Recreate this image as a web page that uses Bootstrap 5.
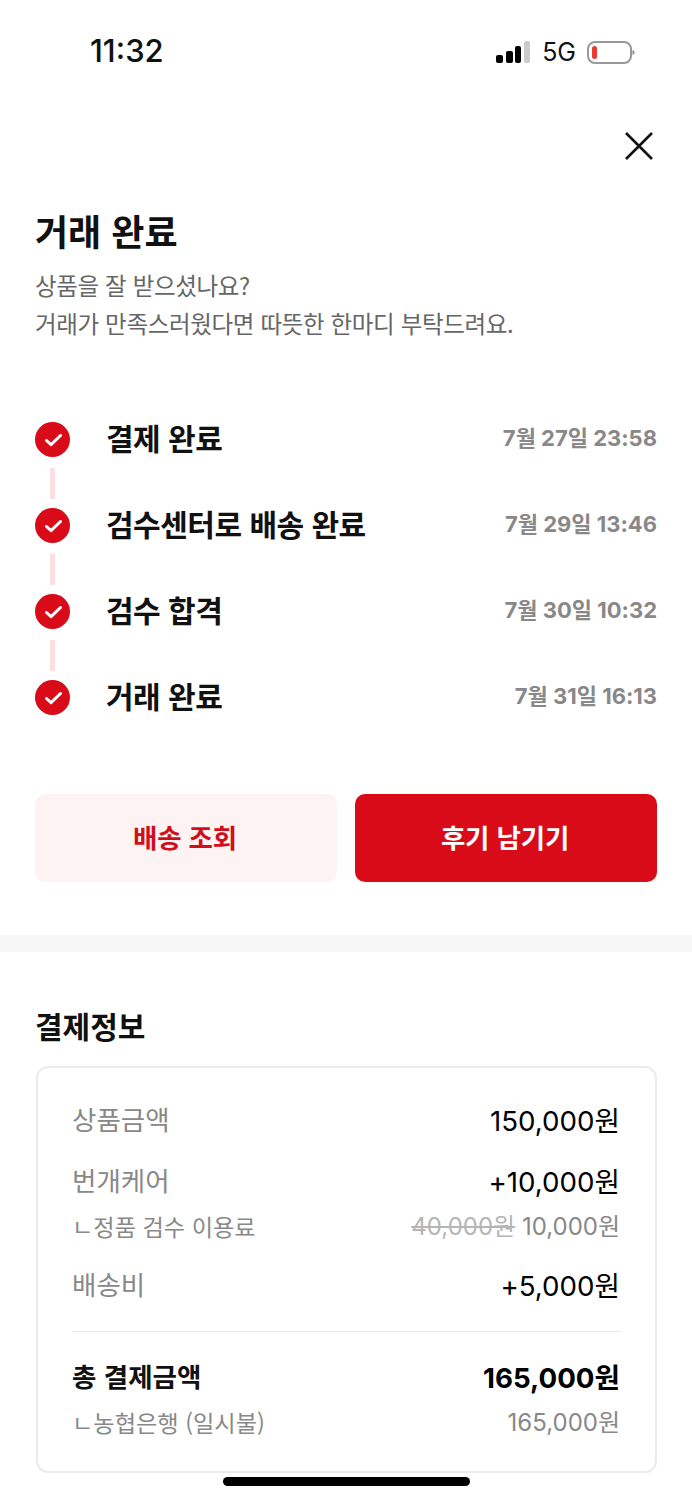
<!DOCTYPE html>
<html lang="ko">
<head>
  <meta charset="UTF-8">
  <title>거래 완료</title>
  <link href="https://cdn.jsdelivr.net/npm/bootstrap@5.3.0/dist/css/bootstrap.min.css" rel="stylesheet">
  <style>
    body {
      background-color: #fff;
      color: #111;
      font-family: "Noto Sans CJK KR", "Liberation Sans", sans-serif;
    }
    .phone {
      position: relative;
      width: 692px;
      height: 1500px;
      overflow: hidden;
    }
    .status-bar {
      height: 72px;
      padding: 30px 57px 0 90px;
    }
    .status-time {
      font-family: Inter, "Liberation Sans", sans-serif;
      font-size: 31px;
      font-weight: 500;
      line-height: 42px;
    }
    .status-net {
      font-family: Inter, "Liberation Sans", sans-serif;
      font-size: 25px;
      line-height: 44px;
      margin: 0 11px 0 10px;
    }
    .close-row {
      height: 82px;
      padding: 58px 37px 0 0;
      display: flex;
      justify-content: flex-end;
    }
    .top-section {
      padding: 0 35px;
    }
    .page-title {
      font-size: 36px;
      font-weight: 700;
      line-height: 50px;
      margin: 51px 0 11px;
    }
    .page-sub {
      font-size: 23.5px;
      line-height: 38px;
      color: #666;
      letter-spacing: -0.33px;
    }
    .steps {
      margin-top: 80px;
    }
    .step-row {
      height: 35px;
      margin-bottom: 51px;
      position: relative;
    }
    .step-row:last-child {
      margin-bottom: 0;
    }
    .step-row:not(:last-child)::after {
      content: "";
      position: absolute;
      left: 15px;
      top: 46px;
      width: 5px;
      height: 31px;
      background-color: #fae0e2;
    }
    .step-dot {
      width: 35px;
      height: 35px;
      flex: none;
      border-radius: 50%;
      background-color: #d90b18;
      display: flex;
      align-items: center;
      justify-content: center;
    }
    .step-name {
      font-size: 30px;
      font-weight: 700;
      letter-spacing: -0.5px;
      margin: 0 0 4px 36px;
    }
    .step-date {
      font-family: Inter, "Noto Sans CJK KR", sans-serif;
      font-size: 22px;
      font-weight: 700;
      color: #888;
      margin: 0 0 2px auto;
    }
    .action-row {
      margin-top: 79px;
      gap: 18px;
    }
    .action-btn {
      flex: 1;
      height: 88px;
      border: 0;
      border-radius: 10px;
      font-size: 26.5px;
      font-weight: 700;
      letter-spacing: -0.2px;
      padding: 0 2px 2px 0;
    }
    .btn-soft {
      background-color: #fdf3f3;
      color: #d00f1c;
    }
    .btn-main {
      background-color: #d90b18;
      color: #fff;
    }
    .thick-divider {
      height: 17px;
      margin-top: 53px;
      background-color: #f6f6f6;
    }
    .pay-title {
      font-size: 30px;
      font-weight: 700;
      line-height: 44px;
      margin: 51px 0 19px;
    }
    .pay-box {
      margin: 0 0 0 1px;
      height: 407px;
      padding: 25px 35px 0 34px;
      border: 2px solid #ebebeb;
      border-radius: 12px;
    }
    .pay-row {
      line-height: 56px;
      height: 56px;
      font-size: 26.5px;
      color: #888;
    }
    .pay-row .lbl {
      margin-top: -2px;
    }
    .pay-row .amt {
      font-family: Inter, "Noto Sans CJK KR", sans-serif;
      color: #000;
    }
    .amt {
      font-size: 27.7px;
      font-weight: 400;
    }
    .pay-sub {
      height: 34px;
      line-height: 32px;
      font-size: 23.2px;
      color: #888;
    }
    .pay-sub .amt-sub {
      font-family: Inter, "Noto Sans CJK KR", sans-serif;
      font-size: 24px;
      line-height: 34px;
    }
    .old-price {
      color: #b5b5b5;
      text-decoration: line-through;
    }
    .pay-line {
      height: 1px;
      background-color: #ebebeb;
      margin: 17px 0 18px;
    }
    .pay-total {
      font-size: 26.500px;
      font-weight: 700;
      color: #111;
    }
    .pay-total .amt {
      font-weight: 700;
    }
    .row-care {
      margin-top: 5px;
    }
    .row-ship {
      margin-top: 14px;
    }
    .home-bar {
      position: absolute;
      left: 223px;
      bottom: 14px;
      width: 247px;
      height: 9px;
      border-radius: 5px;
      background-color: #000;
    }
  </style>
</head>
<body>

<div class="phone">
  <div class="status-bar d-flex justify-content-between">
    <span class="status-time">11:32</span>
    <div class="d-flex align-items-center align-self-start">
      <svg width="36" height="42" viewBox="0 0 36 42">
        <rect x="0" y="24" width="7" height="8" rx="2" fill="#000"/>
        <rect x="10" y="20" width="7" height="12" rx="2" fill="#000"/>
        <rect x="19" y="15" width="6" height="17" rx="2" fill="#000"/>
        <rect x="28" y="10" width="6" height="22" rx="2" fill="#ccc"/>
      </svg>
      <span class="status-net">5G</span>
      <svg width="48" height="42" viewBox="0 0 48 42">
        <rect x="1" y="11" width="43" height="21" rx="7" fill="#fff" stroke="#999" stroke-width="2"/>
        <rect x="5" y="15" width="5" height="13" rx="2.5" fill="#ea3a30"/>
        <path d="M45.5 19v5c1.300-.5 2-1.500 2-2.500s-.7-2-2-2.500z" fill="#888"/>
      </svg>
    </div>
  </div>

  <div class="close-row">
    <svg width="32" height="32" viewBox="0 0 32 32">
      <path d="M3 3l26 26M29 3L3 29" stroke="#111" stroke-width="2.600" fill="none"/>
    </svg>
  </div>

  <div class="top-section">
    <h1 class="page-title">거래 완료</h1>
    <div class="page-sub">상품을 잘 받으셨나요?<br>거래가 만족스러웠다면 따뜻한 한마디 부탁드려요.</div>

    <div class="steps" id="steps"></div>

    <div class="action-row d-flex">
      <button class="action-btn btn-soft">배송 조회</button>
      <button class="action-btn btn-main">후기 남기기</button>
    </div>
  </div>

  <div class="thick-divider"></div>

  <div class="top-section">
    <h2 class="pay-title">결제정보</h2>
    <div class="pay-box">
      <div class="pay-row d-flex justify-content-between"><span class="lbl">상품금액</span><span class="amt">150,000원</span></div>
      <div class="pay-row row-care d-flex justify-content-between"><span class="lbl">번개케어</span><span class="amt">+10,000원</span></div>
      <div class="pay-sub d-flex justify-content-between"><span>ㄴ정품 검수 이용료</span><span class="amt-sub"><span class="old-price">40,000원</span> 10,000원</span></div>
      <div class="pay-row row-ship d-flex justify-content-between"><span class="lbl">배송비</span><span class="amt">+5,000원</span></div>
      <div class="pay-line"></div>
      <div class="pay-row pay-total d-flex justify-content-between"><span class="lbl">총 결제금액</span><span class="amt">165,000원</span></div>
      <div class="pay-sub d-flex justify-content-between"><span>ㄴ농협은행 (일시불)</span><span class="amt-sub">165,000원</span></div>
    </div>
  </div>

  <div class="home-bar"></div>
</div>

<script>
  const etapas = [
    ["결제 완료", "7월 27일 23:58"],
    ["검수센터로 배송 완료", "7월 29일 13:46"],
    ["검수 합격", "7월 30일 10:32"],
    ["거래 완료", "7월 31일 16:13"]
  ];
  const lista = document.getElementById("steps");
  etapas.forEach(e => {
    lista.innerHTML += `
      <div class="step-row d-flex align-items-center">
        <span class="step-dot">
          <svg width="18" height="14" viewBox="0 0 18 14"><path d="M2.500 7.500l4.500 4.200L16.500 2.500" stroke="#fff" stroke-width="3" fill="none" stroke-linecap="round" stroke-linejoin="round"/></svg>
        </span>
        <span class="step-name">${e[0]}</span>
        <span class="step-date">${e[1]}</span>
      </div>
    `;
  });
</script>

</body>
</html>
